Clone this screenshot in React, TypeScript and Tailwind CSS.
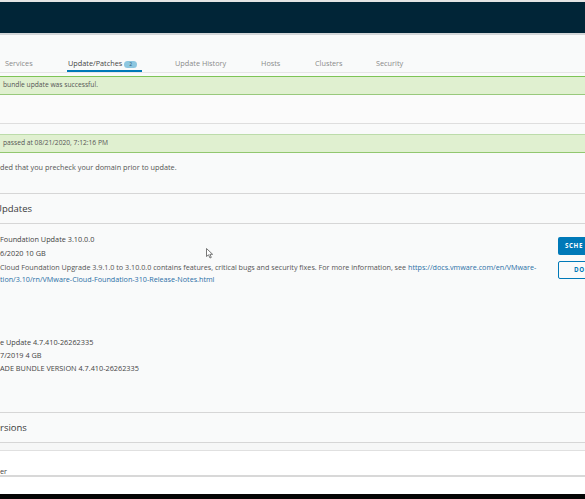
import React from "react";

export default function App() {
  const tabs = [
    { label: "Services", w: "w-[63px]", active: false },
    { label: "Update/Patches", w: "w-[107px]", active: true },
    { label: "Update History", w: "w-[86px]", active: false },
    { label: "Hosts", w: "w-[54px]", active: false },
    { label: "Clusters", w: "w-[61px]", active: false },
    { label: "Security", w: "w-[60px]", active: false },
  ];
  return (
    <div
      className="w-[585px] h-[499px] overflow-hidden bg-[#f9fafa] flex flex-col relative text-[#565656]"
      style={{ fontFamily: "'Open Sans', 'Liberation Sans', sans-serif" }}
    >
      <div className="h-[2px] bg-[#e4e4e4] shrink-0" />
      <div className="h-[31px] bg-[#012537] shrink-0" />
      <div className="h-[2px] bg-[#d3d6d8] shrink-0" />
      {/* tabs */}
      <div className="h-[38px] shrink-0 flex items-end border-b border-[#e6e6e6] pl-[5px]">
        {tabs.map((t) => (
          <div key={t.label} className={`${t.w} shrink-0 flex flex-col`}>
            <div className="flex items-center h-[10px]">
              <span
                className={`text-[7.3px] leading-none ${
                  t.active ? "text-[#454545]" : "text-[#8a8a8a]"
                }`}
              >
                {t.label}
              </span>
              {t.active && (
                <span className="ml-[2px] h-[7px] w-[13px] rounded-full bg-[#8dc7e0] text-[5px] leading-[7px] text-center text-[#2d5b75]">
                  2
                </span>
              )}
            </div>
            <div className="h-[1px]" />
            <div className={`h-[2px] w-[75px] -ml-[1px] ${t.active ? "bg-[#0079b8]" : ""}`} />
          </div>
        ))}
      </div>
      <div className="h-[3px] shrink-0" />
      {/* success banner */}
      <div className="h-[19px] shrink-0 bg-[#e0f0d0] border-t border-[#7ec456] border-b border-b-[#98c97c] flex items-center pl-[3px]">
        <span className="text-[6.7px] text-[#555]">bundle update was successful.</span>
      </div>
      <div className="h-[28px] shrink-0 bg-[#fbfbfb]" />
      <div className="h-px shrink-0 bg-[#dedede]" />
      <div className="h-[10px] shrink-0" />
      {/* precheck banner */}
      <div className="h-[19px] shrink-0 bg-[#e0f0d0] border-t border-[#bcdcaa] border-b border-b-[#92c76f] flex items-center pl-[3px]">
        <span className="text-[6.7px] text-[#555]">passed at 08/21/2020, 7:12:16 PM</span>
      </div>
      <div className="h-[40px] shrink-0 flex pt-[9px]">
        <span className="text-[7.3px] leading-[11px] text-[#555]">ded that you precheck your domain prior to update.</span>
      </div>
      <div className="h-px shrink-0 bg-[#d6d6d6]" />
      {/* Updates header */}
      <div className="h-[29px] shrink-0 flex items-center pt-[2px] overflow-hidden">
        <span className="text-[9.5px] text-[#3a3a3a] -ml-[5px]">Updates</span>
      </div>
      <div className="h-px shrink-0 bg-[#d6d6d6]" />
      {/* update 1 */}
      <div className="h-[100px] shrink-0 flex relative">
        <div className="flex-1 flex flex-col pt-[10px] gap-[3px]">
          <span className="text-[7.3px] leading-[11px] text-[#444]">Foundation Update 3.10.0.0</span>
          <span className="text-[7.3px] leading-[11px] text-[#444]">6/2020 10 GB</span>
          <span className="text-[7.2px] leading-[11px] text-[#555] whitespace-nowrap">
            Cloud Foundation Upgrade 3.9.1.0 to 3.10.0.0 contains features, critical bugs and security fixes. For more information, see{" "}
            <span className="text-[#2b6fa6]">https://docs.vmware.com/en/VMware-</span>
          </span>
          <span className="text-[7.2px] leading-[7px] text-[#2b6fa6]">
            tion/3.10/rn/VMware-Cloud-Foundation-310-Release-Notes.html
          </span>
        </div>
        <div className="w-[27px] shrink-0 flex flex-col pt-[13px] gap-[6px]">
          <div className="h-[18px] w-[30px] bg-[#0079b8] rounded-l-[2px] flex items-center pl-[7px]">
            <span className="text-[6.2px] font-bold tracking-[0.6px] text-white">SCHE</span>
          </div>
          <div className="h-[18px] w-[30px] border border-[#0079b8] rounded-l-[2px] flex items-center pl-[15px]">
            <span className="text-[6.2px] font-bold tracking-[0.6px] text-[#0079b8]">DO</span>
          </div>
        </div>
        {/* cursor */}
        <svg className="absolute left-[206px] top-[24px]" width="8" height="11" viewBox="0 0 8 11">
          <path d="M0.5 0.5 L0.5 8.5 L2.5 6.8 L4 10 L5.3 9.4 L3.9 6.3 L6.6 6.3 Z" fill="#fff" stroke="#555" strokeWidth="0.8" />
        </svg>
      </div>
      {/* update 2 */}
      <div className="h-[88px] shrink-0 flex flex-col pt-[13px] gap-[2px]">
        <span className="text-[7.3px] leading-[11px] text-[#444]">e Update 4.7.410-26262335</span>
        <span className="text-[7.3px] leading-[11px] text-[#444]">7/2019 4 GB</span>
        <span className="text-[7.3px] leading-[11px] text-[#444]">ADE BUNDLE VERSION 4.7.410-26262335</span>
      </div>
      <div className="h-px shrink-0 bg-[#d6d6d6]" />
      <div className="h-[29px] shrink-0 flex items-center pt-[2px]">
        <span className="text-[9.5px] text-[#3a3a3a]">rsions</span>
      </div>
      <div className="h-px shrink-0 bg-[#d6d6d6]" />
      <div className="h-[7px] shrink-0 bg-[#f6f7f7]" />
      <div className="h-px shrink-0 bg-[#e0e0e0]" />
      <div className="h-[24px] shrink-0 bg-white flex items-end">
        <span className="text-[7.3px] leading-[8px] text-[#444]">er</span>
      </div>
      <div className="h-[2px] shrink-0 bg-[#d8d8d8]" />
      <div className="h-[17px] shrink-0 bg-white" />
      <div className="flex-1 bg-[#050505]" />
    </div>
  );
}
